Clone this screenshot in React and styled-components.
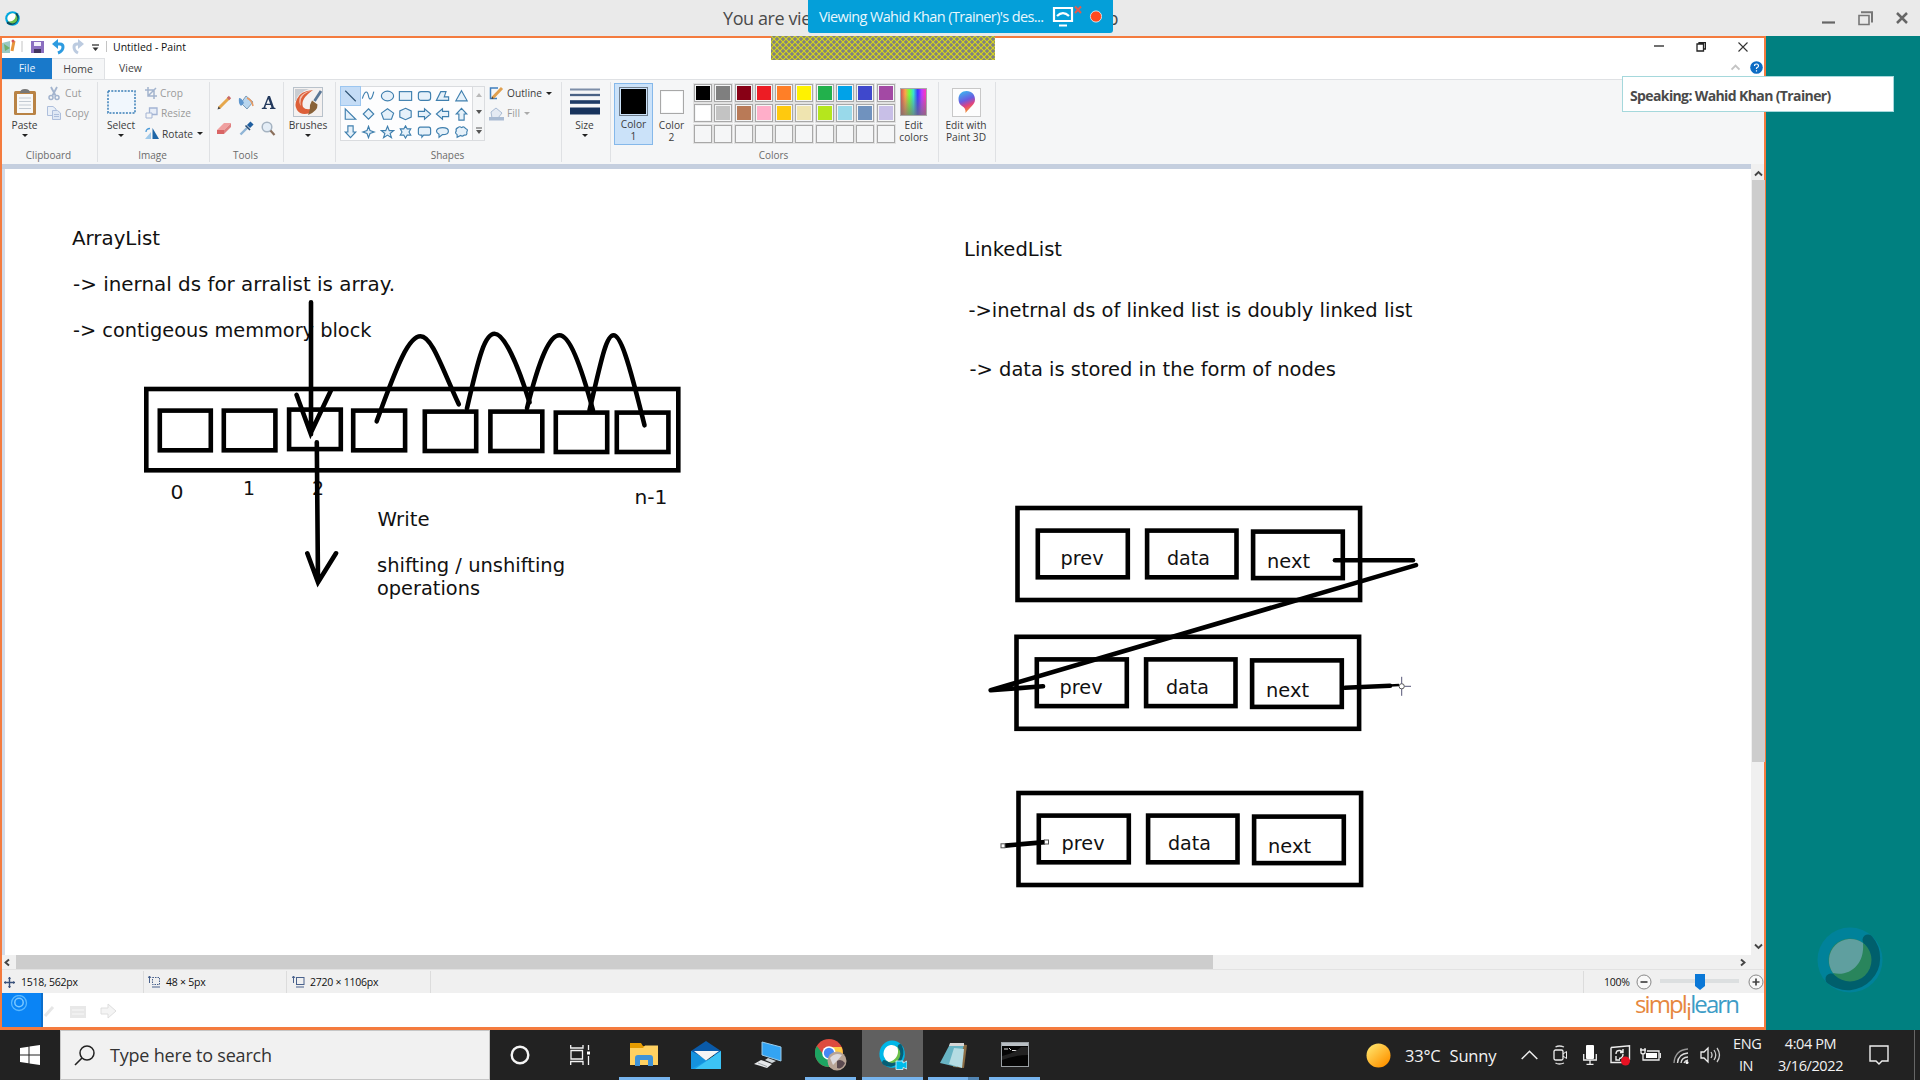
import React from "react";
import styled, { createGlobalStyle } from "styled-components";

const Global = createGlobalStyle`
  * { box-sizing: border-box; }
  html, body { margin: 0; padding: 0; overflow: hidden; }
  body { font-family: "Open Sans", "Noto Sans", sans-serif; color: #222; }
  svg { display: block; flex: none; }
`;

const Screen = styled.div`
  position: relative;
  width: 1920px;
  height: 1080px;
  display: flex;
  flex-direction: column;
  overflow: hidden;
`;

/* ---------- viewer chrome ---------- */
const TopBar = styled.header`
  height: 36px;
  background: #eaeaea;
  display: flex;
  align-items: center;
  padding: 0 12px 0 5px;
`;
const TopTitle = styled.div`
  width: 395px;
  margin: 0 auto 0 703px;
  display: flex;
  justify-content: space-between;
  font-size: 18px;
  letter-spacing: -0.41px;
  color: #4a4a4a;
  white-space: nowrap;
`;
const TopControls = styled.div`
  display: flex;
  align-items: center;
  gap: 23px;
`;
const Banner = styled.div`
  position: absolute;
  left: 808px;
  top: 0;
  width: 305px;
  height: 33px;
  background: #049fd9;
  border-radius: 0 0 3px 3px;
  display: flex;
  align-items: center;
  justify-content: space-between;
  padding: 0 11px;
  color: #e9f7fd;
`;
const BannerText = styled.span`
  font-size: 14.5px;
  letter-spacing: -0.62px;
  white-space: nowrap;
`;
const Hatch = styled.div`
  position: absolute;
  left: 771px;
  top: 36px;
  width: 224px;
  height: 24px;
`;
const Speaking = styled.div`
  position: absolute;
  left: 1622px;
  top: 76px;
  width: 272px;
  height: 36px;
  background: #fff;
  border: 1px solid #a5d8dc;
  padding-left: 7px;
  font-size: 14px;
  font-weight: 700;
  letter-spacing: -0.62px;
  line-height: 37px;
  color: #4a4a4a;
  white-space: nowrap;
`;
const Main = styled.main`
  height: 994px;
  display: flex;
`;
const Share = styled.section`
  width: 1766px;
  height: 994px;
  border: solid #f47b3e;
  border-width: 2px 2px 3px 2px;
  background: #fff;
  display: flex;
  flex-direction: column;
`;
const Side = styled.aside`
  flex: 1;
  background: #008080;
  display: flex;
  flex-direction: column;
  justify-content: flex-end;
  align-items: flex-end;
  padding: 0 37px 37px 0;
`;

/* ---------- paint: title and tabs ---------- */
const TitleBar = styled.div`
  height: 20px;
  display: flex;
  align-items: center;
  padding: 0 16px 3px 0;
`;
const WindowName = styled.span`
  flex: 1;
  margin-left: 5px;
  padding-top: 1px;
  font-size: 10.5px;
  letter-spacing: 0;
  color: #111;
`;
const WindowControls = styled.div`
  display: flex;
  align-items: center;
  gap: 32px;
`;
const Tabs = styled.div`
  height: 21px;
  display: flex;
  align-items: stretch;
  padding-right: 1px;
`;
const Tab = styled.div`
  width: ${(p) => p.$w}px;
  padding-bottom: 1px;
  display: flex;
  align-items: center;
  justify-content: center;
  font-size: 10.5px;
  background: ${(p) => (p.$file ? "#1979ca" : p.$active ? "#f5f6f7" : "transparent")};
  color: ${(p) => (p.$file ? "#e9f4fd" : "#444")};
  border: solid #dfe1e4;
  border-width: ${(p) => (p.$active ? "1px 1px 0 0" : "0")};
`;
const TabEnd = styled.div`
  margin-left: auto;
  padding-bottom: 2px;
  display: flex;
  align-items: center;
  gap: 10px;
`;

/* ---------- ribbon ---------- */
const Ribbon = styled.div`
  height: 85px;
  background: #f5f6f7;
  border-top: 1px solid #dfe1e4;
  display: flex;
`;
const Group = styled.div`
  width: ${(p) => p.$w}px;
  margin: 2px 0;
  height: 80px;
  border-right: 1px solid #dfe1e4;
  display: flex;
  flex-direction: column;
  justify-content: space-between;
`;
const Tools = styled.div`
  height: 63px;
  display: flex;
  padding-left: ${(p) => p.$l || 0}px;
`;
const GroupName = styled.div`
  height: 13px;
  padding-right: 2px;
  font-size: 10px;
  line-height: 13px;
  text-align: center;
  color: #6b6b6b;
`;
const BigButton = styled.div`
  width: ${(p) => p.$w}px;
  margin-left: ${(p) => p.$ml || 0}px;
  height: ${(p) => (p.$active ? 62 : 60)}px;
  margin-top: ${(p) => (p.$active ? 1 : 2)}px;
  padding-top: 2px;
  display: flex;
  flex-direction: column;
  align-items: center;
  background: ${(p) => (p.$active ? "#cbe2f9" : "transparent")};
  border: 1px solid ${(p) => (p.$active ? "#85b8ea" : "transparent")};
  color: #3c3c3c;
`;
const BigIcon = styled.div`
  height: 30px;
  display: flex;
  align-items: center;
`;
const BigLabel = styled.div`
  font-size: 10.2px;
  line-height: 12px;
  padding-top: 2px;
  text-align: center;
  white-space: pre;
`;
const Caret = styled.i`
  width: 0;
  height: 0;
  margin: ${(p) => p.$m || "3px 0 0"};
  border: 3px solid transparent;
  border-top: 3.5px solid ${(p) => p.$c || "#222"};
  border-bottom: 0;
`;
const Rows = styled.div`
  display: flex;
  flex-direction: column;
  margin-left: ${(p) => p.$ml || 0}px;
  padding-top: ${(p) => p.$t || 1}px;
`;
const SmallButton = styled.div`
  height: 20.3px;
  display: flex;
  align-items: center;
  gap: ${(p) => p.$g || 3}px;
  font-size: 10.2px;
  color: ${(p) => (p.$on ? "#3c3c3c" : "#9a9a9a")};
`;
const ToolGrid = styled.div`
  display: grid;
  grid-template-columns: repeat(3, 22px);
  grid-template-rows: repeat(2, 26px);
  padding-top: 7px;
  place-items: center;
`;
const Gallery = styled.div`
  width: 145px;
  height: 55px;
  margin-top: 4px;
  border: 1px solid #dadcdf;
  background: #fdfdfe;
  display: flex;
`;
const ShapeGrid = styled.div`
  width: 131px;
  display: grid;
  grid-template-columns: repeat(7, 18.5px);
  grid-template-rows: repeat(3, 18px);
`;
const ShapeCell = styled.div`
  display: flex;
  align-items: center;
  justify-content: center;
  background: ${(p) => (p.$on ? "#c4dcf6" : "transparent")};
  outline: ${(p) => (p.$on ? "1px solid #9cc6f0" : "none")};
`;
const GalleryScroll = styled.div`
  flex: 1;
  border-left: 1px solid #dadcdf;
  background: #f5f6f7;
  display: flex;
  flex-direction: column;
  align-items: center;
  justify-content: space-around;
`;
const Palette = styled.div`
  display: grid;
  grid-template-columns: repeat(10, 18px);
  grid-template-rows: repeat(3, 18px);
  gap: 2.3px;
  margin: 2px 0 0 4px;
`;
const Swatch = styled.div`
  width: ${(p) => p.$s || 18}px;
  height: ${(p) => p.$s || 18}px;
  border: 1px solid ${(p) => (p.$dark ? "#6f7d8c" : "#a8a8a8")};
  padding: 1px;
  background: ${(p) => p.$c || "#f5f6f7"};
  background-clip: content-box;
  box-shadow: ${(p) => (p.$s ? "none" : "0 0 0 1px #e2e2e2")};
`;

/* ---------- workspace ---------- */
const Strip = styled.div`
  height: 5px;
  background: #c5cfdf;
  margin-right: 13px;
`;
const Work = styled.div`
  height: 786px;
  display: flex;
`;
const Gutter = styled.div`
  width: 3px;
  background: #d4dbe8;
`;
const VScroll = styled.div`
  width: 13px;
  margin-top: -5px;
  background: #f0f0f0;
  display: flex;
  flex-direction: column;
  align-items: center;
  padding: 5px 0 4px 1px;
`;
const VThumb = styled.div`
  width: 13px;
  height: 582px;
  margin: 2px 0 auto;
  background: #cdcdcd;
`;
const HScroll = styled.div`
  height: 14px;
  background: #f0f0f0;
  display: flex;
  align-items: center;
  padding: 0 17px 0 1px;
`;
const HThumb = styled.div`
  width: 1197px;
  height: 14px;
  margin: 0 auto 0 4px;
  background: #cdcdcd;
`;
const Status = styled.div`
  height: 24px;
  background: #f0f0f0;
  border-top: 1px solid #e2e2e2;
  display: flex;
  align-items: stretch;
  padding-top: 1px;
  font-size: 10.5px;
  letter-spacing: -0.25px;
  color: #111;
`;
const StatusCell = styled.div`
  width: ${(p) => p.$w}px;
  flex-shrink: 0;
  border-right: 1px solid #dcdcdc;
  padding-left: ${(p) => p.$l || 2}px;
  display: flex;
  align-items: center;
  gap: ${(p) => p.$g || 5}px;
`;
const Zoom = styled.div`
  flex: 1;
  display: flex;
  align-items: center;
  padding-left: 20px;
`;
const ZoomSlider = styled.div`
  margin-left: 5px;
`;
const Footer = styled.div`
  flex: 1;
  display: flex;
`;
const BlueTile = styled.div`
  width: 41px;
  height: 34px;
  background: #0a84f5;
  border-right: 2px solid #0b6ecb;
  padding: 2px 0 0 8px;
`;
const Brand = styled.div`
  margin-left: auto;
  width: 129px;
  font-family: "Open Sans", sans-serif;
  font-size: 24px;
  line-height: 22px;
  letter-spacing: -1.9px;
  color: #e6883f;
  white-space: nowrap;
  b { font-weight: 400; color: #3d9cc6; }
  i { font-style: normal; position: relative; top: 7px; }
`;

/* ---------- taskbar ---------- */
const Taskbar = styled.footer`
  height: 50px;
  background: #222;
  display: flex;
  color: #f2f2f2;
`;
const Start = styled.div`
  width: 60px;
  display: flex;
  align-items: center;
  justify-content: center;
`;
const Search = styled.div`
  width: 430px;
  background: #f1f1f1;
  border: 1px solid #c6c6c6;
  display: flex;
  align-items: center;
  gap: 15px;
  padding-left: 13px;
  color: #333;
  font-size: 18px;
  letter-spacing: -0.2px;
`;
const TaskItem = styled.div`
  width: ${(p) => p.$w || 62}px;
  margin-left: ${(p) => p.$ml || 0}px;
  display: flex;
  flex-direction: column;
  align-items: center;
  background: ${(p) => (p.$active ? "#606060" : "transparent")};
`;
const TaskIcon = styled.div`
  height: 47px;
  padding-top: 3px;
  display: flex;
  align-items: center;
`;
const Underline = styled.div`
  width: ${(p) => p.$w || 51}px;
  height: 3px;
  background: ${(p) => (p.$stack ? "linear-gradient(90deg,#76b4ee 79%,#5285b3 79%)" : "#76b4ee")};
`;
const Tray = styled.div`
  margin-left: auto;
  display: flex;
  align-items: center;
`;
const TrayItem = styled.div`
  width: ${(p) => p.$w}px;
  margin-right: ${(p) => p.$mr || 0}px;
  display: flex;
  justify-content: center;
`;
const Weather = styled.span`
  width: 110px;
  padding-left: 14px;
  font-size: 16.5px;
  letter-spacing: -0.2px;
  white-space: pre;
  display: flex;
  gap: 9px;
`;
const TwoLine = styled.div`
  width: ${(p) => p.$w}px;
  margin: 0 ${(p) => (p.$w < 50 ? "1px 0 -1px" : "0")};
  text-align: center;
  font-size: 14.5px;
  letter-spacing: -0.4px;
  line-height: 22px;
`;
const Peek = styled.div`
  width: 6px;
  height: 50px;
  border-left: 1px solid #666;
`;

/* ---------- drawing on the canvas ---------- */
const Ink = styled.svg`
  width: 1746px;
  height: 786px;
  background: #fff;
  font-family: "DejaVu Sans", sans-serif;
  font-size: 19.5px;
  fill: #111;
  .s { fill: none; stroke: #000; stroke-width: 4.6; stroke-linecap: round; stroke-linejoin: miter; }
`;

const T = ({ x, y, w, children }) => (
  <text x={x} y={y} textLength={w} lengthAdjust="spacingAndGlyphs">{children}</text>
);
const Box = ({ x, y, x2, y2 }) => (
  <rect className="s" x={x + 1.8} y={y + 2} width={x2 - x - 4} height={y2 - y - 4} />
);
const Node = ({ dx, dy }) => (
  <g transform={`translate(${dx} ${dy})`}>
    <Box x={1015.7} y={505.7} x2={1362.3} y2={601.7} />
    <Box x={1036} y={528.3} x2={1130} y2={579} />
    <Box x={1145.3} y={528.3} x2={1238.7} y2={579} />
    <Box x={1251.3} y={529.3} x2={1345} y2={579.8} />
    <T x={1060.6} y={565} w={43}>prev</T>
    <T x={1167} y={565} w={43}>data</T>
    <T x={1267} y={568} w={43}>next</T>
  </g>
);
const cells = [
  [158, 408.3, 213, 452], [222, 408.3, 277.6, 452], [287.3, 407.3, 343, 450.8],
  [351.4, 408.3, 407.3, 452], [423, 409.3, 478.4, 452.7], [488.6, 409.3, 544.5, 452.7],
  [554, 410.3, 609.4, 453.7], [615, 410.3, 670.6, 453.7],
];
const Drawing = () => (
  <Ink viewBox="5 168.7 1746 786">
    <T x={72} y={245} w={88}>ArrayList</T>
    <T x={73} y={291} w={322}>{"-> inernal ds for arralist is array."}</T>
    <T x={73} y={337} w={298.5}>{"-> contigeous memmory block"}</T>
    <Box x={144.5} y={386.7} x2={680.5} y2={472} />
    {cells.map((c, i) => <Box key={i} x={c[0]} y={c[1]} x2={c[2]} y2={c[3]} />)}
    <T x={170.5} y={498.6} w={13}>0</T>
    <T x={243} y={494.6} w={12}>1</T>
    <T x={312} y={495} w={12}>2</T>
    <T x={634.5} y={503.6} w={33}>n-1</T>
    <T x={377.5} y={525.6} w={52}>Write</T>
    <T x={377} y={572} w={188}>shifting / unshifting</T>
    <T x={377} y={595} w={103}>operations</T>
    <g className="s">
      <path d="M311 302V434M296.5 394.5L310.6 433L331 390" />
      <path d="M316.8 442L318 582M307.3 553L318 582L336 553" />
      <path d="M376.7 421C398 362 409 336 420.500 336S442 368 458.8 404" />
      <path d="M467 408C479 355 485 333.500 494.500 333.500S517 362 529.500 402" />
      <path d="M527 408C540 356 550 335 559.500 335S580 362 593 410" />
      <path d="M589.500 410C602 356 606.500 335 613.500 335S628 358 644.500 425" />
    </g>
    <T x={964} y={256} w={98}>LinkedList</T>
    <T x={968.5} y={316.5} w={444}>{"->inetrnal ds of linked list is doubly linked list"}</T>
    <T x={969.5} y={375.5} w={366.5}>{"-> data is stored in the form of nodes"}</T>
    <Node dx={0} dy={0} />
    <Node dx={-1} dy={128.8} />
    <Node dx={1} dy={285} />
    <g className="s">
      <path d="M1335 560H1413" />
      <path strokeLinejoin="round" d="M1416 564.8L990.700 690L1043 686" />
      <path d="M1345 687.500L1390 685.500" />
      <path strokeLinecap="butt" d="M1005 845.300L1045 841.800" />
    </g>
    <g fill="none" stroke="#555" strokeWidth="1">
      <rect x="1001" y="843.5" width="4" height="4" fill="#fff" />
      <rect x="1044.5" y="839.7" width="4" height="4" fill="#fff" />
      <path stroke="#000" strokeWidth="2.5" d="M1390 685.2L1399 684.7" />
      <circle cx="1401.7" cy="686" r="2.6" fill="#fff" />
      <path stroke="#557" d="M1401.7 676.5V683.5M1401.7 688.5V695.5M1404.5 686H1411" />
    </g>
  </Ink>
);

/* ---------- icons ---------- */
const Svg = ({ w, h, children, ...r }) => (
  <svg width={w} height={h} viewBox={`0 0 ${w} ${h}`} fill="none" {...r}>{children}</svg>
);
const Webex = ({ s }) => (
  <svg width={s} height={s} viewBox="0 0 64 64" fill="none">
    <circle cx="32" cy="32" r="31" fill="#00a7e0" />
    <path d="M49 14A27 27 0 0 1 13 51" stroke="#0a4a63" strokeWidth="11" strokeLinecap="round" />
    <circle cx="32" cy="32" r="21" fill="#6cc04a" />
    <path d="M45 15A21 21 0 0 0 15 44C30 48 49 34 45 15Z" fill="#fff" />
  </svg>
);
const shapes = [
  <path d="M2 2L14 14" />,
  <path d="M1 11C4 1 7 2 8 8S12 12 14 3" />,
  <ellipse cx="8" cy="8" rx="7" ry="5.5" />,
  <rect x="1" y="3" width="14" height="10" />,
  <rect x="1" y="3" width="14" height="10" rx="3" />,
  <path d="M6 3H12L10 9H15V13H1Z" />,
  <path d="M8 2L14.5 13.5H1.5Z" />,
  <path d="M2 2V14H14Z" />,
  <path d="M8 2L14 8L8 14L2 8Z" />,
  <path d="M8 2L15 7L12.5 14H3.5L1 7Z" />,
  <path d="M8 1.5L14.5 4.5V11.5L8 14.5L1.500 11.5V4.500Z" />,
  <path d="M1 5H8V2L15 8L8 14V11H1Z" />,
  <path d="M15 5H8V2L1 8L8 14V11H15Z" />,
  <path d="M5 15V8H2L8 1.500L14 8H11V15Z" />,
  <path d="M5 1V8H2L8 14.5L14 8H11V1Z" />,
  <path d="M8 1.500L9.700 6.300L14.500 8L9.700 9.700L8 14.500L6.300 9.700L1.500 8L6.300 6.300Z" />,
  <path d="M8 1.500L10 6.500H15L11 9.700L12.500 14.500L8 11.500L3.500 14.500L5 9.700L1 6.500H6Z" />,
  <path d="M8 1L10 4.500H14L12 8L14 11.500H10L8 15L6 11.500H2L4 8L2 4.500H6Z" />,
  <path d="M3 2.500H13Q15 2.500 15 5V9Q15 11.500 13 11.500H7L5 14V11.500H3Q1 11.500 1 9V5Q1 2.500 3 2.500Z" />,
  <path d="M8 3C17 3 17 11 8 11L4 14V10.500C-1 8 1 3 8 3Z" />,
  <path d="M4 3Q6 1 8 3Q11 1 12.500 4Q16 5 14 8Q15 12 11 11.500Q9 13.500 7 12L3 14V11Q0 9 2 7Q1 4 4 3Z" />,
];
const palette = [
  "#000", "#7f7f7f", "#880015", "#ed1c24", "#ff7f27", "#fff200", "#22b14c", "#00a2e8", "#3f48cc", "#a349a4",
  "#fff", "#c3c3c3", "#b97a57", "#ffaec9", "#ffc90e", "#efe4b0", "#b5e61d", "#99d9ea", "#7092be", "#c8bfe7",
  "", "", "", "", "", "", "", "", "", "",
];

const QuickAccess = () => (
  <Svg w={106} h={16}>
    <path d="M0 4L8 2V14H0Z" fill="#9bc9c4" /><path d="M2 5L8 9L3 12Z" fill="#6fb06c" />
    <path d="M12 2L10 12" stroke="#e7953c" strokeWidth="3" /><circle cx="11" cy="2" r="1.500" fill="#d65757" />
    <path d="M20 2V13M104.500 2V13" stroke="#c4c4c4" />
    <path d="M29 2H42V14H29Z" fill="#8b6fc0" /><path d="M32 3H39V7H32Z" fill="#f3effa" /><path d="M32 10H39V14H32Z" fill="#43355f" />
    <path d="M53 5H58Q61 5 61 8Q61 12 56 14" stroke="#2d9be0" strokeWidth="3" /><path d="M56 0V10L50 5Z" fill="#2d9be0" />
    <path d="M79 5H75Q72 5 72 8Q72 12 76 14" stroke="#bccbe0" strokeWidth="3" /><path d="M76 0V10L82 5Z" fill="#bccbe0" />
    <path d="M90 6H97" stroke="#333" strokeWidth="1.300" /><path d="M90.500 8.500H96.500L93.500 12Z" fill="#333" />
  </Svg>
);
const Paste = () => (
  <Svg w={24} h={28}>
    <rect x="1" y="3" width="22" height="24" rx="1.500" fill="#b98345" />
    <path d="M4 6H20V25H4Z" fill="#f7f8f9" /><path d="M7 5Q7 1 12 1T17 5Z" fill="#777" />
    <path d="M6 10H18M6 13.500H18M6 17H18M6 20.500H18" stroke="#c3cad2" />
  </Svg>
);
const Cut = () => (
  <Svg w={14} h={15}>
    <path d="M4 1L8.500 9.500M10 1L5.500 9.500" stroke="#a3b4ce" strokeWidth="1.800" />
    <circle cx="4" cy="11.500" r="2" stroke="#a3b4ce" strokeWidth="1.500" /><circle cx="10" cy="11.500" r="2" stroke="#a3b4ce" strokeWidth="1.500" />
  </Svg>
);
const Copy = () => (
  <Svg w={14} h={14}>
    <path d="M.5.500H6L9 3V9.500H.500Z" fill="#eaf0f8" stroke="#aebfdc" /><path d="M5.500 4.500H10.500L13.500 7V13.500H5.500Z" fill="#dfe8f5" stroke="#aebfdc" /><path d="M7 8.500H12M7 10.500H12" stroke="#aebfdc" />
  </Svg>
);
const Crop = () => (
  <Svg w={12} h={12}><path d="M3 0V9H12M0 3H9V12M3 9L11 1" stroke="#a3b4ce" strokeWidth="1.500" /></Svg>
);
const Resize = () => (
  <Svg w={13} h={12}><path d="M4.500 1H12V7.500H4.500Z" fill="#e8eef8" stroke="#a3b4d4" strokeWidth="1.300" /><path d="M1 6H7V11H1Z" fill="#f5f6f7" stroke="#a3b4d4" /></Svg>
);
const Rotate = () => (
  <Svg w={14} h={13}><path d="M7.500 1V12H14Z" fill="#1d66a8" /><path d="M6 5V12H0Z" fill="#9fc9ea" /><path d="M1 5Q1 1.500 5 1.500" stroke="#4d9bd8" strokeWidth="1.300" /></Svg>
);
const toolIcons = [
  <Svg w={15} h={15}><path d="M2 13L12 3" stroke="#e6a84d" strokeWidth="3" /><path d="M11 4L13 2" stroke="#c96a6a" strokeWidth="3.200" /><path d="M0.500 14.500L1.500 11.500L3.500 13.500Z" fill="#444" /></Svg>,
  <Svg w={16} h={15}><path d="M8 1L15 7L9 14L3 8Z" fill="#b9d6ee" stroke="#7c9cb8" /><path d="M1 3Q4 3 6 8L3 11Q0 8 1 3Z" fill="#5f97cf" /><path d="M9 3Q14 5 15 11" stroke="#e99b63" strokeWidth="1.600" /></Svg>,
  <Svg w={15} h={15}><path fillRule="evenodd" d="M7 1H9L13 12.500L14.500 13V14H9V13L10.500 12.500L9.700 10H5L4.200 12.500L5.800 13V14H.800V13L2.500 12.500ZM7.300 4L5.400 8.800H9.200Z" fill="#23395d" /></Svg>,
  <Svg w={16} h={14}><path d="M1 9L8 2H15L8 9Z" fill="#f0a0a0" /><path d="M1 9H8V13H1Z" fill="#d96565" /><path d="M8 9L15 2V6L8 13Z" fill="#e08080" /></Svg>,
  <Svg w={15} h={15}><path d="M1.500 13.500L8 7" stroke="#8fb5d6" strokeWidth="2.400" /><path d="M9.500 5.500L13 2" stroke="#1f5fa0" strokeWidth="4.500" /><path d="M6.500 4.500L11 9" stroke="#274b73" strokeWidth="1.600" /></Svg>,
  <Svg w={15} h={15}><circle cx="6" cy="6" r="4.800" fill="#e4edf6" stroke="#a5b3c1" strokeWidth="1.500" /><path d="M9.500 9.500L13.500 14" stroke="#8a6f5c" strokeWidth="2.200" /></Svg>,
];
const BrushIcon = () => (
  <Svg w={30} h={30}>
    <rect x=".5" y=".5" width="29" height="29" fill="#f4f1f0" stroke="#b9c2cb" />
    <path d="M2 2H16Q4 6 3 14H2Z" fill="#c9cdd2" />
    <path d="M20 3Q7 4 4 12Q1 18 4 23Q8 29 17 26Q20 25 21 21Q13 24 10 20Q7 12 20 3Z" fill="#dd5f38" />
    <path d="M20 3Q10 6 8 12Q7 16 8 19Q5 15 7 10Q10 5 20 3Z" fill="#f1c0ae" />
    <path d="M28 4L21.500 14" stroke="#5a7796" strokeWidth="2.800" /><path d="M19 13.500L24.500 17.500Q25 24 15 28Q17.500 23 17 18Z" fill="#8a6238" />
  </Svg>
);
const OutlineIcon = () => (
  <Svg w={15} h={14}><path d="M9 2H1.500V12.500H8" stroke="#3f7fbf" strokeWidth="1.500" /><path d="M3.500 12L13 2" stroke="#e0a050" strokeWidth="3" /><path d="M2.500 13L3 10.500L5 12.500Z" fill="#444" /></Svg>
);
const FillIcon = () => (
  <Svg w={15} h={15}><path d="M7 2L13 7L9 12H3L2 6Z" fill="#e4eaf3" stroke="#a9bbd3" /><path d="M0 11H15V14.500H0Z" fill="#a9bbd3" /></Svg>
);
const SizeIcon = () => (
  <Svg w={30} h={28}><path d="M0 1.500H30" stroke="#7d8ea8" strokeWidth="2" /><path d="M0 7H30" stroke="#4a6285" strokeWidth="2.300" /><path d="M0 14H30" stroke="#1f3c66" strokeWidth="3.600" /><path d="M0 23H30" stroke="#17335c" strokeWidth="7" /></Svg>
);
const Rainbow = styled.div`
  width: 27px;
  height: 28px;
  border: 1px solid #a9a9a9;
  background:
    linear-gradient(180deg, rgba(255,255,255,.1) 20%, rgba(120,120,120,.75) 100%),
    linear-gradient(90deg, #c44, #f93, #6f2, #2dc, #22f, #b2f, #f2a);
`;
const Paint3D = () => (
  <Svg w={29} h={29}>
    <defs><linearGradient id="p3" x1="0" y1="0" x2=".3" y2="1"><stop offset="0" stopColor="#35c3f2" /><stop offset=".5" stopColor="#6a5be0" /><stop offset=".75" stopColor="#e2427e" /><stop offset="1" stopColor="#f08a35" /></linearGradient></defs>
    <rect x=".5" y=".5" width="28" height="28" fill="#fdfdfd" stroke="#c8c8c8" />
    <path d="M14.500 3C20 3 23 7 23 11.500C23 17 18 19 13.500 25Q14 20 10 18Q6.500 16 6.500 11C6.500 6 10 3 14.500 3Z" fill="url(#p3)" />
  </Svg>
);
const Chev = ({ d, c = "#444" }) => <Svg w={9} h={9}><path d={d} stroke={c} strokeWidth="1.900" /></Svg>;

export default function App() {
  return (
    <Screen>
      <Global />
      <TopBar>
        <Webex s={15} />
        <TopTitle><span>You are viewing Wahid Khan</span><span>(Trainer)'s desktop</span></TopTitle>
        <TopControls>
          <Svg w={13} h={14}><path d="M0 11.500H13" stroke="#666" strokeWidth="2.200" /></Svg>
          <Svg w={15} h={15}><path d="M3 1.200H14V11.500" stroke="#777" strokeWidth="2" /><path d="M1 4.500H11V13.500H1Z" stroke="#777" strokeWidth="1.600" /></Svg>
          <Svg w={12} h={12}><path d="M1 1L11 11M11 1L1 11" stroke="#666" strokeWidth="2.500" /></Svg>
        </TopControls>
      </TopBar>

      <Main>
        <Share>
          <TitleBar>
            <QuickAccess />
            <WindowName>Untitled - Paint</WindowName>
            <WindowControls>
              <Svg w={10} h={10}><path d="M0 4H10" stroke="#222" strokeWidth="1.300" /></Svg>
              <Svg w={10} h={10}><path d="M1 2H7.500V9H1ZM3 2V.700H9.400V7H7.500" stroke="#222" strokeWidth="1.300" /></Svg>
              <Svg w={10} h={10}><path d="M.500.500L9.500 9.500M9.500.500L.500 9.500" stroke="#333" strokeWidth="1.100" /></Svg>
            </WindowControls>
          </TitleBar>
          <Tabs>
            <Tab $w={50} $file>File</Tab>
            <Tab $w={53} $active>Home</Tab>
            <Tab $w={51}>View</Tab>
            <TabEnd>
              <Chev d="M.500 6.500L4.500 2.500L8.500 6.500" c="#c4c4c4" />
              <Svg w={13} h={13}><circle cx="6.500" cy="6.500" r="6.300" fill="#0d6cc4" /><path d="M4.500 5Q4.500 3 6.500 3T8.500 5Q8.500 6 6.500 7V8M6.500 9.200V10.500" stroke="#fff" strokeWidth="1.200" /></Svg>
            </TabEnd>
          </Tabs>

          <Ribbon>
            <Group $w={96}>
              <Tools $l={2}>
                <BigButton $w={41}><BigIcon><Paste /></BigIcon><BigLabel>Paste</BigLabel><Caret /></BigButton>
                <Rows $ml={2}>
                  <SmallButton $g={4}><Cut />Cut</SmallButton>
                  <SmallButton $g={4}><Copy />Copy</SmallButton>
                </Rows>
              </Tools>
              <GroupName>Clipboard</GroupName>
            </Group>
            <Group $w={112}>
              <Tools $l={3}>
                <BigButton $w={40}><BigIcon><Svg w={29} h={24}><rect x="1" y="1" width="27" height="22" fill="#f1f7fd" stroke="#3a7fb8" strokeWidth="1.500" strokeDasharray="2 1.300" /></Svg></BigIcon><BigLabel>Select</BigLabel><Caret /></BigButton>
                <Rows $ml={4}>
                  <SmallButton><Crop />Crop</SmallButton>
                  <SmallButton><Resize />Resize</SmallButton>
                  <SmallButton $on><Rotate />Rotate<Caret $m="0 0 0 1px" /></SmallButton>
                </Rows>
              </Tools>
              <GroupName>Image</GroupName>
            </Group>
            <Group $w={74}>
              <Tools $l={3}>
                <ToolGrid>{toolIcons.map((t, i) => <React.Fragment key={i}>{t}</React.Fragment>)}</ToolGrid>
              </Tools>
              <GroupName>Tools</GroupName>
            </Group>
            <Group $w={52}>
              <Tools><BigButton $w={48}><BigIcon><BrushIcon /></BigIcon><BigLabel>Brushes</BigLabel><Caret /></BigButton></Tools>
            </Group>
            <Group $w={226}>
              <Tools $l={4}>
                <Gallery>
                  <ShapeGrid>
                    {shapes.map((s, i) => (
                      <ShapeCell key={i} $on={i === 0}>
                        <svg width="15" height="14" viewBox="0 0 16 16" fill={i > 1 ? "#e6f1fa" : "none"} stroke={i ? "#3f7fae" : "#2c4f70"} strokeWidth="1.300">{s}</svg>
                      </ShapeCell>
                    ))}
                  </ShapeGrid>
                  <GalleryScroll>
                    <Svg w={6} h={4}><path d="M0 4L3 0L6 4Z" fill="#b9b9b9" /></Svg>
                    <Svg w={6} h={4}><path d="M0 0L3 4L6 0Z" fill="#555" /></Svg>
                    <Svg w={6} h={7}><path d="M0 1H6" stroke="#555" /><path d="M0 3L3 7L6 3Z" fill="#555" /></Svg>
                  </GalleryScroll>
                </Gallery>
                <Rows $ml={4} $t={1}>
                  <SmallButton $on><OutlineIcon />Outline<Caret $m="0 0 0 1px" /></SmallButton>
                  <SmallButton><FillIcon />Fill<Caret $m="0 0 0 1px" $c="#aaa" /></SmallButton>
                </Rows>
              </Tools>
              <GroupName>Shapes</GroupName>
            </Group>
            <Group $w={49}>
              <Tools><BigButton $w={45}><BigIcon><SizeIcon /></BigIcon><BigLabel>Size</BigLabel><Caret /></BigButton></Tools>
            </Group>
            <Group $w={328}>
              <Tools $l={3}>
                <BigButton $w={39} $active><BigIcon><Swatch $s={29} $c="#000" $dark /></BigIcon><BigLabel>{"Color\n1"}</BigLabel></BigButton>
                <BigButton $w={37}><BigIcon><Swatch $s={24} $c="#fff" /></BigIcon><BigLabel>{"Color\n2"}</BigLabel></BigButton>
                <Palette>{palette.map((c, i) => <Swatch key={i} $c={c} />)}</Palette>
                <BigButton $w={40} $ml={-1}><BigIcon><Rainbow /></BigIcon><BigLabel>{"Edit\ncolors"}</BigLabel></BigButton>
              </Tools>
              <GroupName>Colors</GroupName>
            </Group>
            <Group $w={57}>
              <Tools><BigButton $w={54}><BigIcon><Paint3D /></BigIcon><BigLabel>{"Edit with\nPaint 3D"}</BigLabel></BigButton></Tools>
            </Group>
          </Ribbon>

          <Strip />
          <Work>
            <Gutter />
            <Drawing />
            <VScroll>
              <Chev d="M1 6.500L4.500 3L8 6.500" />
              <VThumb />
              <Chev d="M1 2.500L4.500 6L8 2.500" />
            </VScroll>
          </Work>
          <HScroll>
            <Chev d="M6 1.500L2.500 4.500L6 7.500" />
            <HThumb />
            <Chev d="M3 1.500L6.500 4.500L3 7.500" />
          </HScroll>
          <Status>
            <StatusCell $w={142} $g={6}>
              <Svg w={11} h={11}><path d="M5.500 0V11M0 5.500H11" stroke="#38507a" strokeWidth="1.400" /><path d="M4 2L5.500 0L7 2M4 9L5.500 11L7 9M2 4L0 5.500L2 7M9 4L11 5.500L9 7" fill="#38507a" /></Svg>
              1518, 562px
            </StatusCell>
            <StatusCell $w={143} $l={4}>
              <Svg w={13} h={12}><path d="M1.500 0V7M0 2L1.500 0L3 2M4 11H12" stroke="#48618c" /><rect x="4.500" y="1.500" width="7" height="7" stroke="#48618c" strokeDasharray="1.500 1" /></Svg>
              48 × 5px
            </StatusCell>
            <StatusCell $w={144} $l={5}>
              <Svg w={13} h={12}><path d="M1.500 0V7M0 2L1.500 0L3 2M4 11H12" stroke="#48618c" /><rect x="4.500" y="1.500" width="7.500" height="7" stroke="#48618c" /></Svg>
              2720 × 1106px
            </StatusCell>
            <StatusCell $w={1153} />
            <Zoom>
              100%
              <ZoomSlider><Svg w={129} h={18}>
                <circle cx="9" cy="9" r="7" fill="#f8f8f8" stroke="#888" /><path d="M5.500 9H12.500" stroke="#444" strokeWidth="1.700" />
                <path d="M25 8H104" stroke="#dcdfe0" strokeWidth="4" />
                <path d="M60 1H70V13L65 17L60 13Z" fill="#0a78d7" />
                <circle cx="121" cy="9" r="7" fill="#f8f8f8" stroke="#888" /><path d="M117.500 9H124.500M121 5.500V12.500" stroke="#444" strokeWidth="1.700" />
              </Svg></ZoomSlider>
            </Zoom>
          </Status>
          <Footer>
            <BlueTile>
              <Svg w={18} h={18}><circle cx="9" cy="8" r="7.500" stroke="#5ab8ff" strokeWidth="1.300" /><circle cx="9" cy="7.500" r="4.200" stroke="#7cc8ff" strokeWidth="1.500" /></Svg>
            </BlueTile>
            <Svg w={75} h={34}>
              <path d="M2 23L10 14" stroke="#e6e6e6" strokeWidth="3" />
              <path d="M27 13H43V25H27Z" fill="#e8e8e8" /><path d="M29 17H41M29 21H41" stroke="#f8f8f8" />
              <path d="M58 15H65V11L73 18L65 25V21H58Z" fill="#f4f4f4" stroke="#dedede" />
            </Svg>
            <Brand>simpl<i>i</i><b>learn</b></Brand>
          </Footer>
        </Share>
        <Side>
          <svg width="66" height="66" viewBox="0 0 66 66" fill="none">
            <circle cx="33" cy="33" r="32.500" fill="#00829a" />
            <path d="M51 13A27 27 0 0 1 14 52" stroke="#005f6c" strokeWidth="11" strokeLinecap="round" />
            <circle cx="33" cy="33" r="21.500" fill="#29855c" />
            <path d="M46 16A21.500 21.500 0 0 0 16 46C32 50 48 38 46 16Z" fill="#5f9f9f" />
          </svg>
        </Side>
      </Main>

      <Taskbar>
        <Start>
          <Svg w={20} h={20}><path d="M0 3L8.500 1.700V9.500H0ZM9.500 1.500L20 0V9.500H9.500ZM0 10.500H8.500V18.300L0 17ZM9.500 10.500H20V20L9.500 18.500Z" fill="#fff" /></Svg>
        </Start>
        <Search>
          <Svg w={21} h={21}><circle cx="13" cy="8" r="7" stroke="#222" strokeWidth="1.500" /><path d="M8 13L1 20" stroke="#222" strokeWidth="1.600" /></Svg>
          Type here to search
        </Search>
        <TaskItem $w={60}><TaskIcon><Svg w={20} h={20}><circle cx="10" cy="10" r="8.300" stroke="#f4f4f4" strokeWidth="2.400" /></Svg></TaskIcon></TaskItem>
        <TaskItem $w={60}><TaskIcon>
          <Svg w={20} h={20}><path d="M.700 0V3H13V0M.700 20V16.500H13V20M1 5.500H12.500V14H1ZM18.500 0V5M18.500 11V20" stroke="#f4f4f4" strokeWidth="1.300" /><path d="M17 6.500H20V9.500H17Z" fill="#fff" /></Svg>
        </TaskIcon></TaskItem>
        <TaskItem $ml={3}><TaskIcon>
          <Svg w={28} h={24}><path d="M0 0H11L13 3H27V8H0Z" fill="#e59b00" /><path d="M0 5H13L15 2.500H28V22H0Z" fill="#ffd161" /><path d="M5 23V15Q5 12 8 12H20Q23 12 23 15V23H18V17H10V23Z" fill="#3f93d8" /></Svg>
        </TaskIcon><Underline /></TaskItem>
        <TaskItem><TaskIcon>
          <Svg w={30} h={28}><path d="M0 10L15 0L30 10V14H0Z" fill="#0a5aa8" /><path d="M0 10L15 20L30 10V28H0Z" fill="#1ba0ea" /><path d="M30 10V28H4Z" fill="#3cc3f5" /><path d="M0 10V28L17 19Z" fill="#1592dd" /><path d="M3 10H28L15 19.500Z" fill="#f5f5f5" /></Svg>
        </TaskIcon></TaskItem>
        <TaskItem><TaskIcon>
          <Svg w={28} h={28}><path d="M8 1L27 6V20L8 14Z" fill="#33a4f3" stroke="#9ccbe8" /><path d="M14 17L22 20L18 22L11 19Z" fill="#cfd5d8" /><path d="M0 23L7 19L18 23L13 27Z" fill="#e6e8ea" /><path d="M4 22L13 25.500" stroke="#9fa5a8" /></Svg>
        </TaskIcon></TaskItem>
        <TaskItem $w={63}><TaskIcon>
          <Svg w={32} h={32}>
            <circle cx="14" cy="14" r="14" fill="#dd4b3e" />
            <path d="M1.800 7A14 14 0 0 0 14 28L19 17.500L9 16.500Z" fill="#1da462" />
            <path d="M26.500 8A14 14 0 0 1 14 28L20 15.500L15 8Z" fill="#ffcd46" />
            <circle cx="14" cy="14" r="6.800" fill="#fff" /><circle cx="14" cy="14" r="5.200" fill="#4587f3" />
            <circle cx="22" cy="22" r="9.500" fill="#b8a496" /><path d="M15 19Q20 13 27 16Q24 20 18 26Z" fill="#ddd9dc" /><path d="M22 22Q26 19 30 24Q27 31 22 29Z" fill="#5b4a50" />
          </Svg>
        </TaskIcon><Underline /></TaskItem>
        <TaskItem $active $w={61}><TaskIcon>
          <Svg w={28} h={30}>
            <g transform="scale(.41 .44)"><circle cx="32" cy="32" r="31" fill="#00b7e8" /><path d="M51 15A27 27 0 0 1 13 51" stroke="#075e75" strokeWidth="11" strokeLinecap="round" /><circle cx="32" cy="32" r="20" fill="#6cc04a" /><path d="M45 17A20 20 0 1 0 24 50C38 48 51 34 45 17Z" fill="#fff" /></g>
            <path d="M17 21H24V23L28 21V29L24 27.500V29.500H17Z" fill="#00bceb" stroke="#e6f8fd" strokeWidth=".800" />
          </Svg>
        </TaskIcon><Underline $w={61} /></TaskItem>
        <TaskItem $w={61}><TaskIcon>
          <Svg w={28} h={27}><path d="M10 1L27 3L24 26L13 25Z" fill="#8a6c44" /><path d="M10 2L24 3L17 25L0 21Z" fill="#68b4c4" /><path d="M14 6L24 7L22 26L9 22Z" fill="#b5dce3" /><path d="M10 1H24V4L9 4Z" fill="#d7d7d7" /></Svg>
        </TaskIcon><Underline $stack /></TaskItem>
        <TaskItem $w={61}><TaskIcon>
          <Svg w={28} h={26}><rect x=".5" y=".5" width="27" height="24" fill="#050505" stroke="#9aa0a4" /><path d="M1 1H27V4H1Z" fill="#b9bfc4" /><path d="M3 7H5M6 6V8M8 6L10 8M11 8.500H16" stroke="#ddd" /><path d="M1 14Q12 12 20 5H27V13Q14 13 1 18Z" fill="#222" /></Svg>
        </TaskIcon><Underline /></TaskItem>

        <Tray>
          <Svg w={25} h={25}>
            <defs><linearGradient id="sun" x1=".1" y1=".1" x2=".8" y2=".9"><stop offset="0" stopColor="#ffe36a" /><stop offset="1" stopColor="#ff9400" /></linearGradient></defs>
            <circle cx="12.500" cy="12.500" r="12" fill="url(#sun)" />
          </Svg>
          <Weather><span>33°C</span><span>Sunny</span></Weather>
          <TrayItem $w={56}><Svg w={17} h={10}><path d="M.700 9L8.500 1.200L16.300 9" stroke="#eee" strokeWidth="1.500" /></Svg></TrayItem>
          <TrayItem $w={6}><Svg w={15} h={20}><path d="M2.500 2Q6 0 11 2M2.500 18Q6 20 11 18" stroke="#ddd" strokeWidth="1.300" /><rect x="1" y="5" width="9" height="10" rx="1.500" stroke="#eee" strokeWidth="1.300" /><path d="M10 9L13.500 6.500V13.500L10 11" stroke="#eee" /></Svg></TrayItem>
          <TrayItem $w={53}><Svg w={14} h={20}><rect x="3" y="0" width="8" height="14" rx="1" fill="#fff" /><path d="M.700 9V15H13.300V9M7 15V19M3.500 19.300H10.500" stroke="#eee" strokeWidth="1.300" /></Svg></TrayItem>
          <TrayItem $w={8}><Svg w={21} h={21}><path d="M1 2.500L19.500 .800V15M13 17.500H1V2.500" stroke="#eee" strokeWidth="1.400" /><path d="M6 9Q6 5 10 5.500L13 7M13 4V7.500H10M13 9Q13 13 9 13.500M6 11V15H10" stroke="#eee" strokeWidth="1.400" /><circle cx="15.500" cy="16" r="4.500" fill="#e81123" /></Svg></TrayItem>
          <TrayItem $w={52}><Svg w={21} h={14}><path d="M0 2H6M1 0V2M5 0V2M1 2V5Q3 7 5 5V2M3 6V12H19V3H7" stroke="#eee" strokeWidth="1.300" /><path d="M6 5H17V10H6Z" fill="#fff" /><path d="M20.300 5V10" stroke="#eee" strokeWidth="1.300" /></Svg></TrayItem>
          <TrayItem $w={10}><Svg w={17} h={17}><path d="M1 16Q2 3 15 2" stroke="#999" strokeWidth="1.300" /><path d="M4.500 16Q5 7 15 6M8 16Q8.500 10.500 15 10M11 16Q12 13.500 15 13" stroke="#ddd" strokeWidth="1.400" /><circle cx="14" cy="15.500" r="1.500" fill="#fff" /></Svg></TrayItem>
          <TrayItem $w={48}><Svg w={21} h={18}><path d="M1 6H4L8 2V16L4 12H1Z" stroke="#eee" strokeWidth="1.300" /><path d="M11 6Q13 9 11 12M14 4Q17.500 9 14 14M17 2Q22 9 17 16" stroke="#ccc" strokeWidth="1.300" /></Svg></TrayItem>
          <TwoLine $w={26}>ENG<br />IN</TwoLine>
          <TwoLine $w={101}>4:04 PM<br />3/16/2022</TwoLine>
          <TrayItem $w={36} $mr={17}><Svg w={20} h={20}><path d="M1 1H19V16H13L10 19L7 16H1Z" stroke="#eee" strokeWidth="1.400" /></Svg></TrayItem>
          <Peek />
        </Tray>
      </Taskbar>

      <Banner>
        <BannerText>Viewing Wahid Khan (Trainer)'s des...</BannerText>
        <Svg w={50} h={24}>
          <path d="M2 3H20V16H2Z" stroke="#fff" strokeWidth="2.200" /><path d="M5 11Q11 5 17 11" stroke="#fff" strokeWidth="2.200" /><path d="M7 20.500H15" stroke="#fff" strokeWidth="2" />
          <path d="M23 1.500L29 8M29 1.500L23 8" stroke="#e25a4e" strokeWidth="2" /><circle cx="44" cy="11.500" r="5.600" fill="#ff4a1f" stroke="#e9f7fd" strokeWidth=".800" />
        </Svg>
      </Banner>
      <Hatch>
        <svg width="224" height="24">
          <defs><pattern id="hatch" width="6" height="6" patternUnits="userSpaceOnUse"><rect width="6" height="6" fill="#808080" /><path d="M-1 -1L7 7M7 -1L-1 7" stroke="#d6d61c" strokeWidth="1.100" /></pattern></defs>
          <rect width="224" height="24" fill="url(#hatch)" />
        </svg>
      </Hatch>
      <Speaking>Speaking: Wahid Khan (Trainer)</Speaking>
    </Screen>
  );
}
